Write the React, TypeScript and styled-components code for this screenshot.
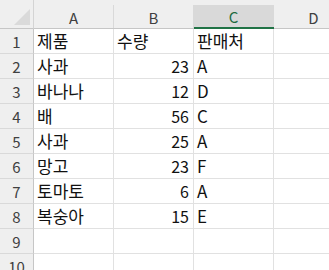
import React from "react";
import styled, { createGlobalStyle } from "styled-components";

const Global = createGlobalStyle`
  html, body { margin: 0; padding: 0; background: #ffffff; overflow: hidden; }
  body { font-family: "Noto Sans CJK KR", "Noto Sans", sans-serif; }
`;

const Sheet = styled.div`
  width: 329px;
  height: 270px;
  overflow: hidden;
  background: #ffffff;
  display: grid;
  grid-template-columns: 34px 80px 80px 80px 80px;
  grid-template-rows: 29px;
  grid-auto-rows: 25px;
`;

const Corner = styled.div`
  box-sizing: border-box;
  background: #efefef;
  border-right: 1px solid #d4d4d4;
  border-bottom: 1px solid #c6c6c6;
  position: relative;
  &::after {
    content: "";
    position: absolute;
    left: 14px;
    top: 9px;
    width: 16px;
    height: 16px;
    background: #dadada;
    clip-path: polygon(100% 0, 100% 100%, 0 100%);
  }
`;

const ColHead = styled.div<{ $selected?: boolean }>`
  box-sizing: border-box;
  background: #efefef;
  border-bottom: ${(p) => (p.$selected ? "2px solid #217346" : "1px solid #c6c6c6")};
  display: flex;
  flex-direction: column;
  & > span {
    margin-top: 5px;
    flex: 1;
    display: flex;
    align-items: center;
    justify-content: center;
    background: ${(p) => (p.$selected ? "#d9d9d9" : "transparent")};
    border-right: 1px solid #d9d9d9;
    color: ${(p) => (p.$selected ? "#1d6b3f" : "#404040")};
    font-size: 15px;
    padding-top: 1px;
  }
`;

const RowHead = styled.div`
  box-sizing: border-box;
  background: #efefef;
  border-right: 1px solid #c6c6c6;
  border-bottom: 1px solid #d9d9d9;
  color: #404040;
  font-size: 15px;
  display: flex;
  align-items: center;
  justify-content: center;
  padding-top: 1px;
`;

const Cell = styled.div<{ $num?: boolean }>`
  box-sizing: border-box;
  border-right: 1px solid #e1e1e1;
  border-bottom: 1px solid #e1e1e1;
  color: #111111;
  font-size: ${(p) => (p.$num ? "16px" : "17px")};
  line-height: 20px;
  display: flex;
  align-items: flex-end;
  justify-content: ${(p) => (p.$num ? "flex-end" : "flex-start")};
  padding: 0 ${(p) => (p.$num ? "4px" : "0")} 2px ${(p) => (p.$num ? "0" : "3px")};
  white-space: nowrap;
`;

const rows: [string, number, string][] = [
  ["사과", 23, "A"],
  ["바나나", 12, "D"],
  ["배", 56, "C"],
  ["사과", 25, "A"],
  ["망고", 23, "F"],
  ["토마토", 6, "A"],
  ["복숭아", 15, "E"],
];

export default function App() {
  return (
    <>
      <Global />
      <Sheet>
        <Corner />
        <ColHead><span>A</span></ColHead>
        <ColHead><span>B</span></ColHead>
        <ColHead $selected><span>C</span></ColHead>
        <ColHead><span>D</span></ColHead>

        <RowHead>1</RowHead>
        <Cell>제품</Cell>
        <Cell>수량</Cell>
        <Cell>판매처</Cell>
        <Cell />

        {rows.map((r, i) => (
          <React.Fragment key={i}>
            <RowHead>{i + 2}</RowHead>
            <Cell>{r[0]}</Cell>
            <Cell $num>{r[1]}</Cell>
            <Cell>{r[2]}</Cell>
            <Cell />
          </React.Fragment>
        ))}

        {[9, 10].map((n) => (
          <React.Fragment key={n}>
            <RowHead>{n}</RowHead>
            <Cell />
            <Cell />
            <Cell />
            <Cell />
          </React.Fragment>
        ))}
      </Sheet>
    </>
  );
}
